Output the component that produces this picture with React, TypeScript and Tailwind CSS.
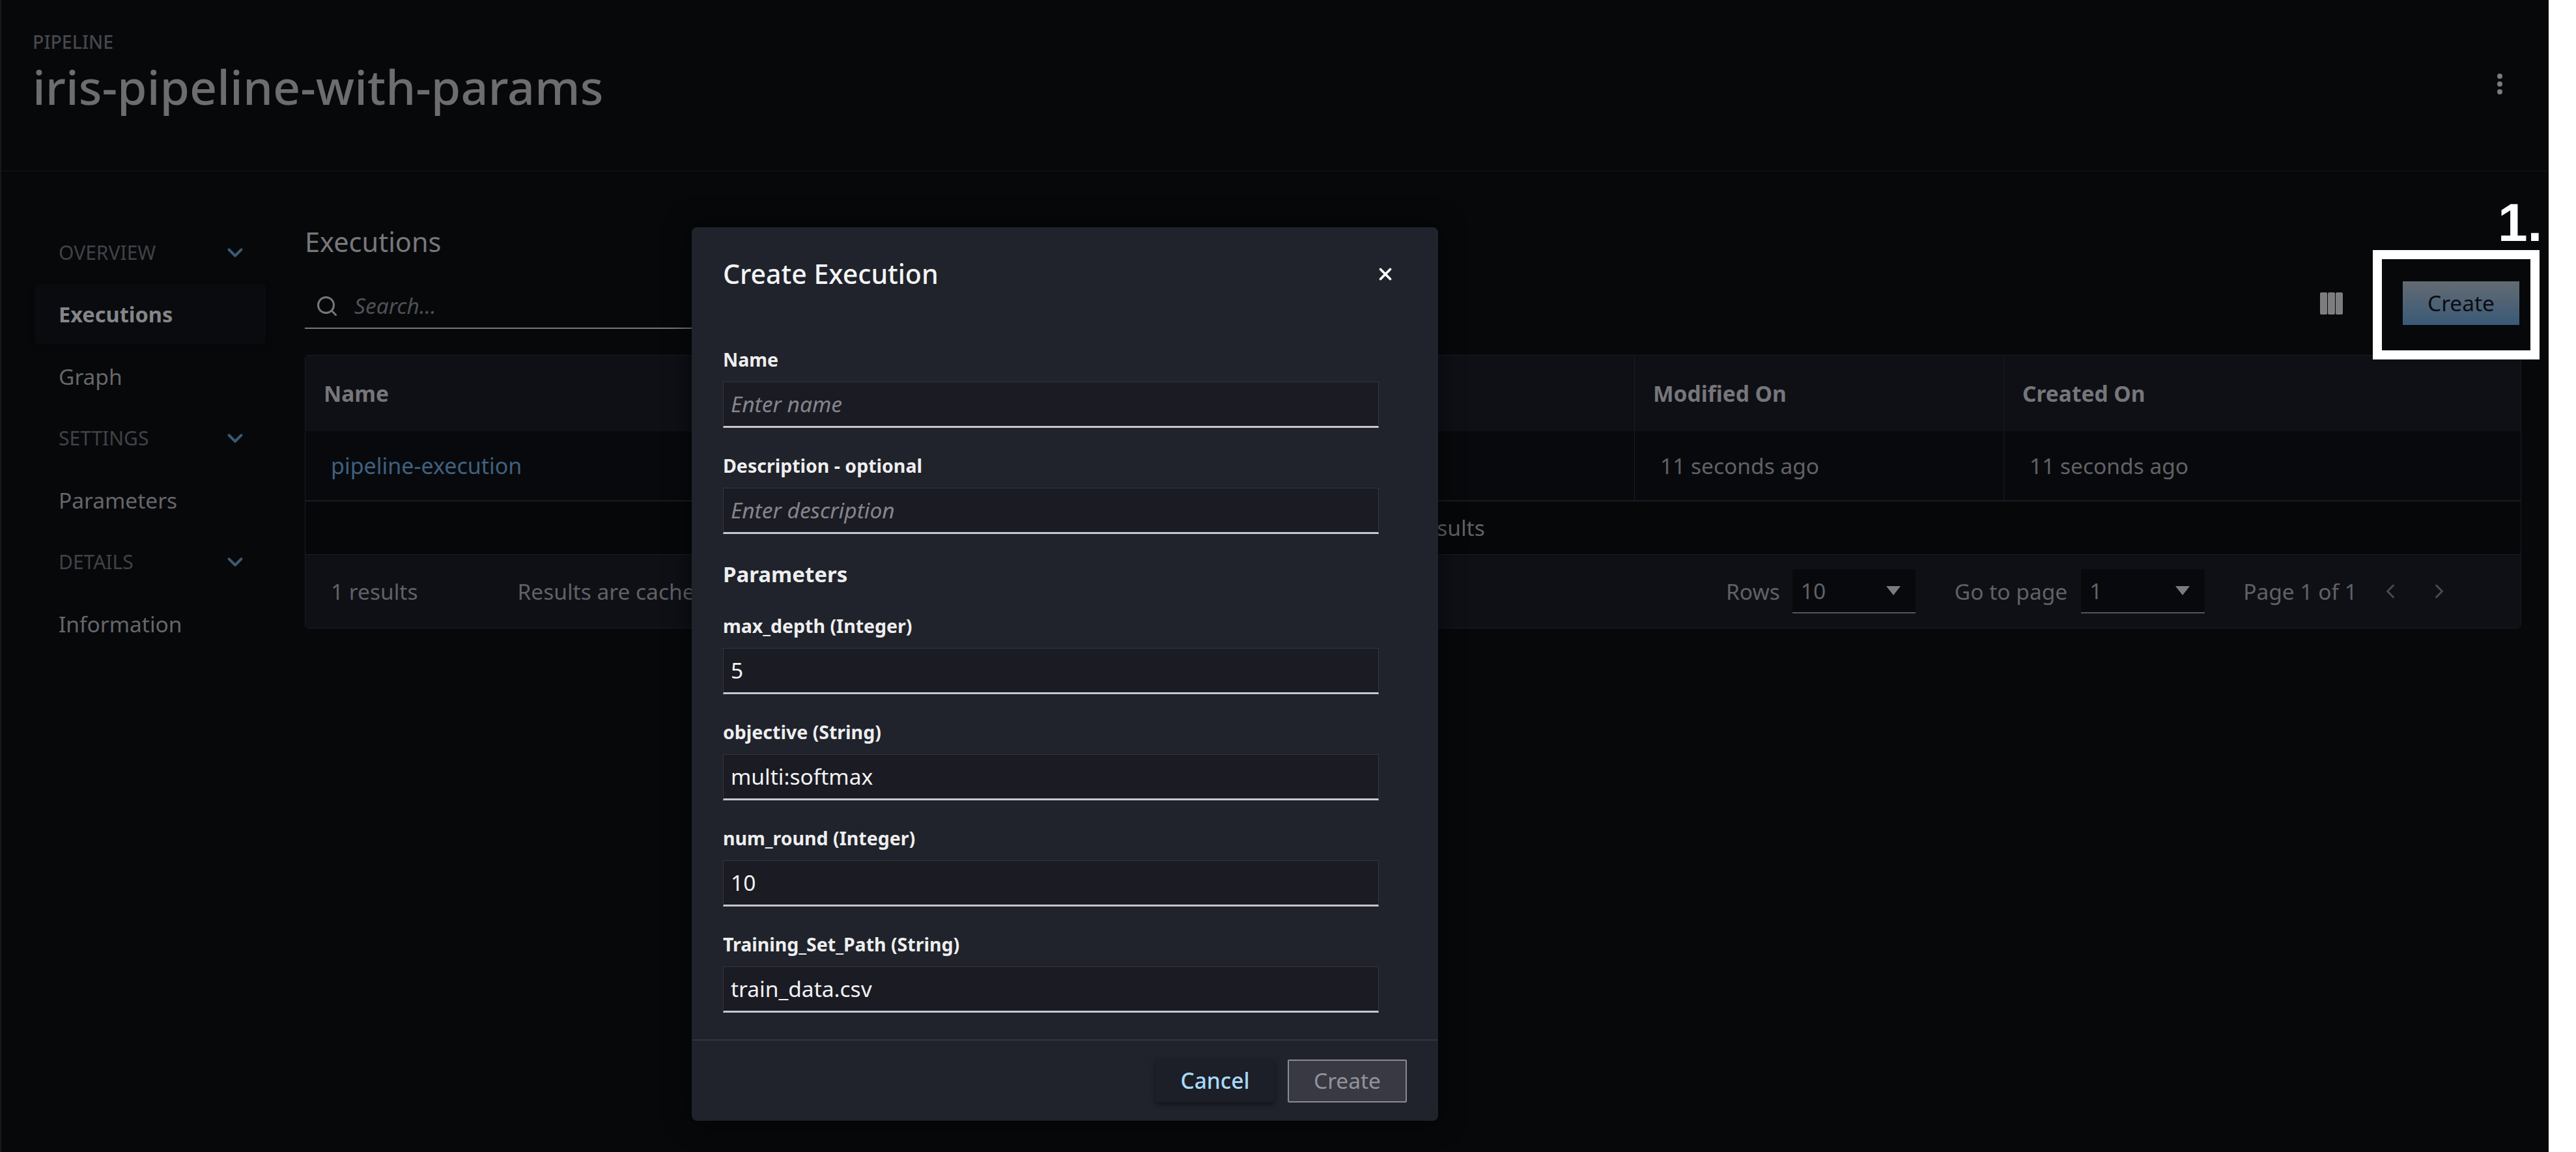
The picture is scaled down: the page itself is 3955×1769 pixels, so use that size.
import React from 'react';
import { ChevronDown, ChevronLeft, ChevronRight, Search, X } from 'lucide-react';

const font = 'font-["Noto_Sans",sans-serif]';

const NavSection = ({ label }: { label: string }) => (
  <div className="flex h-[95px] items-center justify-between pl-[88px] pr-[88px] text-[30px] text-[#414248]">
    <span>{label}</span>
    <ChevronDown className="h-[38px] w-[38px] text-[#3b5a73]" strokeWidth={2.5} />
  </div>
);

const NavItem = ({ label, active }: { label: string; active?: boolean }) => (
  <div className="flex h-[95px] items-center pl-[51px]">
    <div
      className={`flex h-[93px] w-[355px] items-center rounded-[6px] pl-[37px] pt-[2px] ${
        active
          ? 'bg-[#0a0b0e] text-[32.5px] font-bold text-[#85858a] shadow-[0_2px_8px_rgba(0,0,0,0.4)]'
          : 'text-[33.5px] text-[#66666b]'
      }`}
    >
      {label}
    </div>
  </div>
);

const Caret = () => (
  <svg width="24" height="16" viewBox="0 0 24 16" className="fill-[#7a7a80]">
    <path d="M1 1h22L12 15z" />
  </svg>
);

const PageSelect = ({ value, width }: { value: string; width: string }) => (
  <div className={`flex h-[68px] items-center justify-between border-b-2 border-[#55555b] bg-[#08090c] pl-[13px] pr-[22px] ${width}`}>
    <span>{value}</span>
    <Caret />
  </div>
);

const Field = ({ label, value, placeholder }: { label: string; value?: string; placeholder?: string }) => (
  <div className="mb-[31px] flex flex-col">
    <label className="flex h-[54px] items-center text-[28.5px] font-bold text-[#eeeeef]">{label}</label>
    <div className="mt-[7px] flex h-[71px] items-center border border-[#33353d] border-b-[3px] border-b-[#c7c7cf] bg-[#1a1b23] pl-[11px] text-[33.5px]">
      {value ? <span className="text-[#f2f2f3]">{value}</span> : <span className="italic text-[#85858c]">{placeholder}</span>}
    </div>
  </div>
);

export default function App() {
  return (
    <div className={`relative flex h-[1769px] w-[3955px] overflow-hidden bg-white ${font}`}>
      <div className="flex w-[3913px] flex-col border-l-2 border-[#17181c] bg-[#07080a]">
        <header className="flex h-[263px] items-start justify-between border-b border-[#15161a] pl-[48px] pr-[70px]">
          <div>
            <div className="mt-[46px] text-[28.5px] font-medium leading-[36px] text-[#46464d]">PIPELINE</div>
            <h1 className="mt-[6px] text-[73.5px] font-medium leading-[90px] text-[#6d6d70]">iris-pipeline-with-params</h1>
          </div>
          <svg width="10" height="34" viewBox="0 0 10 34" className="mt-[112px] fill-[#7c7c80]">
            <circle cx="5" cy="5" r="4" />
            <circle cx="5" cy="17" r="4" />
            <circle cx="5" cy="29" r="4" />
          </svg>
        </header>

        <div className="flex flex-1">
          <nav className="w-[466px] pt-[77px]">
            <NavSection label="OVERVIEW" />
            <NavItem label="Executions" active />
            <NavItem label="Graph" />
            <NavSection label="SETTINGS" />
            <NavItem label="Parameters" />
            <NavSection label="DETAILS" />
            <NavItem label="Information" />
          </nav>

          <main className="w-[3403px] pt-[78px]">
            <h2 className="text-[41.5px] leading-[60px] text-[#77777c]">Executions</h2>

            <div className="mt-[31px] flex h-[73px] items-end justify-between pr-[3px]">
              <div className="flex h-[69px] w-[1000px] items-center border-b-2 border-[#77777c] pl-[16px] text-[33.5px] italic text-[#4f4f55]">
                <Search className="mr-[24px] h-[36px] w-[36px] text-[#77777c]" strokeWidth={2} />
                Search...
              </div>
              <div className="flex items-center self-start">
                <svg width="35" height="34" viewBox="0 0 35 34" className="mr-[92px] fill-[#7d7d80]">
                  <rect x="0" y="0" width="11" height="34" rx="2" />
                  <rect x="12" y="0" width="11" height="34" rx="2" />
                  <rect x="24" y="0" width="11" height="34" rx="2" />
                </svg>
                <button className="flex h-[67px] w-[179px] items-center justify-center bg-gradient-to-b from-[#636a72] to-[#395a77] text-[33.5px] text-[#0a0c11]">
                  Create
                </button>
              </div>
            </div>

            <div className="mt-[40px] rounded-[6px] border border-[#1a1c22] text-[33.5px] text-[#616166]">
              <div className="grid h-[116px] grid-cols-[2040px_567px_1fr] items-center bg-[#0e1016] font-bold text-[#76767a]">
                <div className="pl-[28px]">Name</div>
                <div className="flex h-full items-center border-l border-[#1a1c22] pl-[28px]">Modified On</div>
                <div className="flex h-full items-center border-l border-[#1a1c22] pl-[28px]">Created On</div>
              </div>
              <div className="grid h-[108px] grid-cols-[2040px_567px_1fr] items-center border-b-2 border-[#1a1c22] bg-[#08090c]">
                <div className="pl-[39px] text-[34px] text-[#3f6080]">pipeline-execution</div>
                <div className="flex h-full items-center border-l border-[#1a1c22] pl-[39px]">11 seconds ago</div>
                <div className="flex h-full items-center border-l border-[#1a1c22] pl-[39px]">11 seconds ago</div>
              </div>
              <div className="flex h-[82px] items-center justify-center border-b border-[#1a1c22] bg-[#060709] pr-[32px]">
                No more results
              </div>
              <div className="flex h-[112px] items-center rounded-b-[6px] bg-[#0e1016] pl-[39px] pr-[107px]">
                <span>1 results</span>
                <span className="ml-[153px]">Results are cached</span>
                <div className="ml-auto flex items-center">
                  <span>Rows</span>
                  <PageSelect value="10" width="ml-[19px] w-[189px]" />
                  <span className="ml-[60px]">Go to page</span>
                  <PageSelect value="1" width="ml-[21px] w-[190px]" />
                  <span className="ml-[59px]">Page 1 of 1</span>
                  <ChevronLeft className="ml-[33px] h-[36px] w-[36px] text-[#4a4a50]" />
                  <ChevronRight className="ml-[39px] h-[36px] w-[36px] text-[#4a4a50]" />
                </div>
              </div>
            </div>
          </main>
        </div>
      </div>

      {/* numbered callout on top of the screenshot */}
      <div className="absolute left-[3643px] top-[384px] h-[168px] w-[256px] border-[14px] border-white" />
      <div className="absolute left-[3835px] top-[297px] font-['Liberation_Sans',sans-serif] text-[82px] font-bold leading-[90px] text-white">1.</div>

      {/* modal */}
      <div className="absolute left-[1062px] top-[349px] flex h-[1372px] w-[1146px] flex-col rounded-[8px] bg-[#20232b] shadow-[0_0_40px_rgba(0,0,0,0.6)]">
        <div className="flex h-[147px] items-center justify-between pb-[4px] pl-[48px] pr-[66px]">
          <h3 className="text-[41px] font-medium text-[#f4f4f5]">Create Execution</h3>
          <X className="h-[30px] w-[30px] text-white" strokeWidth={3} />
        </div>
        <div className="flex flex-1 flex-col pl-[48px] pr-[91px] pt-[29px]">
          <Field label="Name" placeholder="Enter name" />
          <Field label="Description - optional" placeholder="Enter description" />
          <div className="mb-[21px] flex h-[62px] items-center text-[33px] font-bold text-[#eeeeef]">Parameters</div>
          <Field label="max_depth (Integer)" value="5" />
          <Field label="objective (String)" value="multi:softmax" />
          <Field label="num_round (Integer)" value="10" />
          <Field label="Training_Set_Path (String)" value="train_data.csv" />
        </div>
        <div className="flex h-[125px] items-center justify-end gap-[20px] border-t-2 border-[#33353d] pr-[48px]">
          <button className="h-[66px] w-[183px] rounded-[4px] bg-[#1c1f27] text-[33.5px] font-medium text-[#a9d8f7] shadow-[0_3px_8px_rgba(0,0,0,0.5)]">Cancel</button>
          <button className="h-[66px] w-[183px] rounded-[2px] border-2 border-[#8a8a90] bg-[#393943] text-[33.5px] text-[#93939a]">Create</button>
        </div>
      </div>
    </div>
  );
}
